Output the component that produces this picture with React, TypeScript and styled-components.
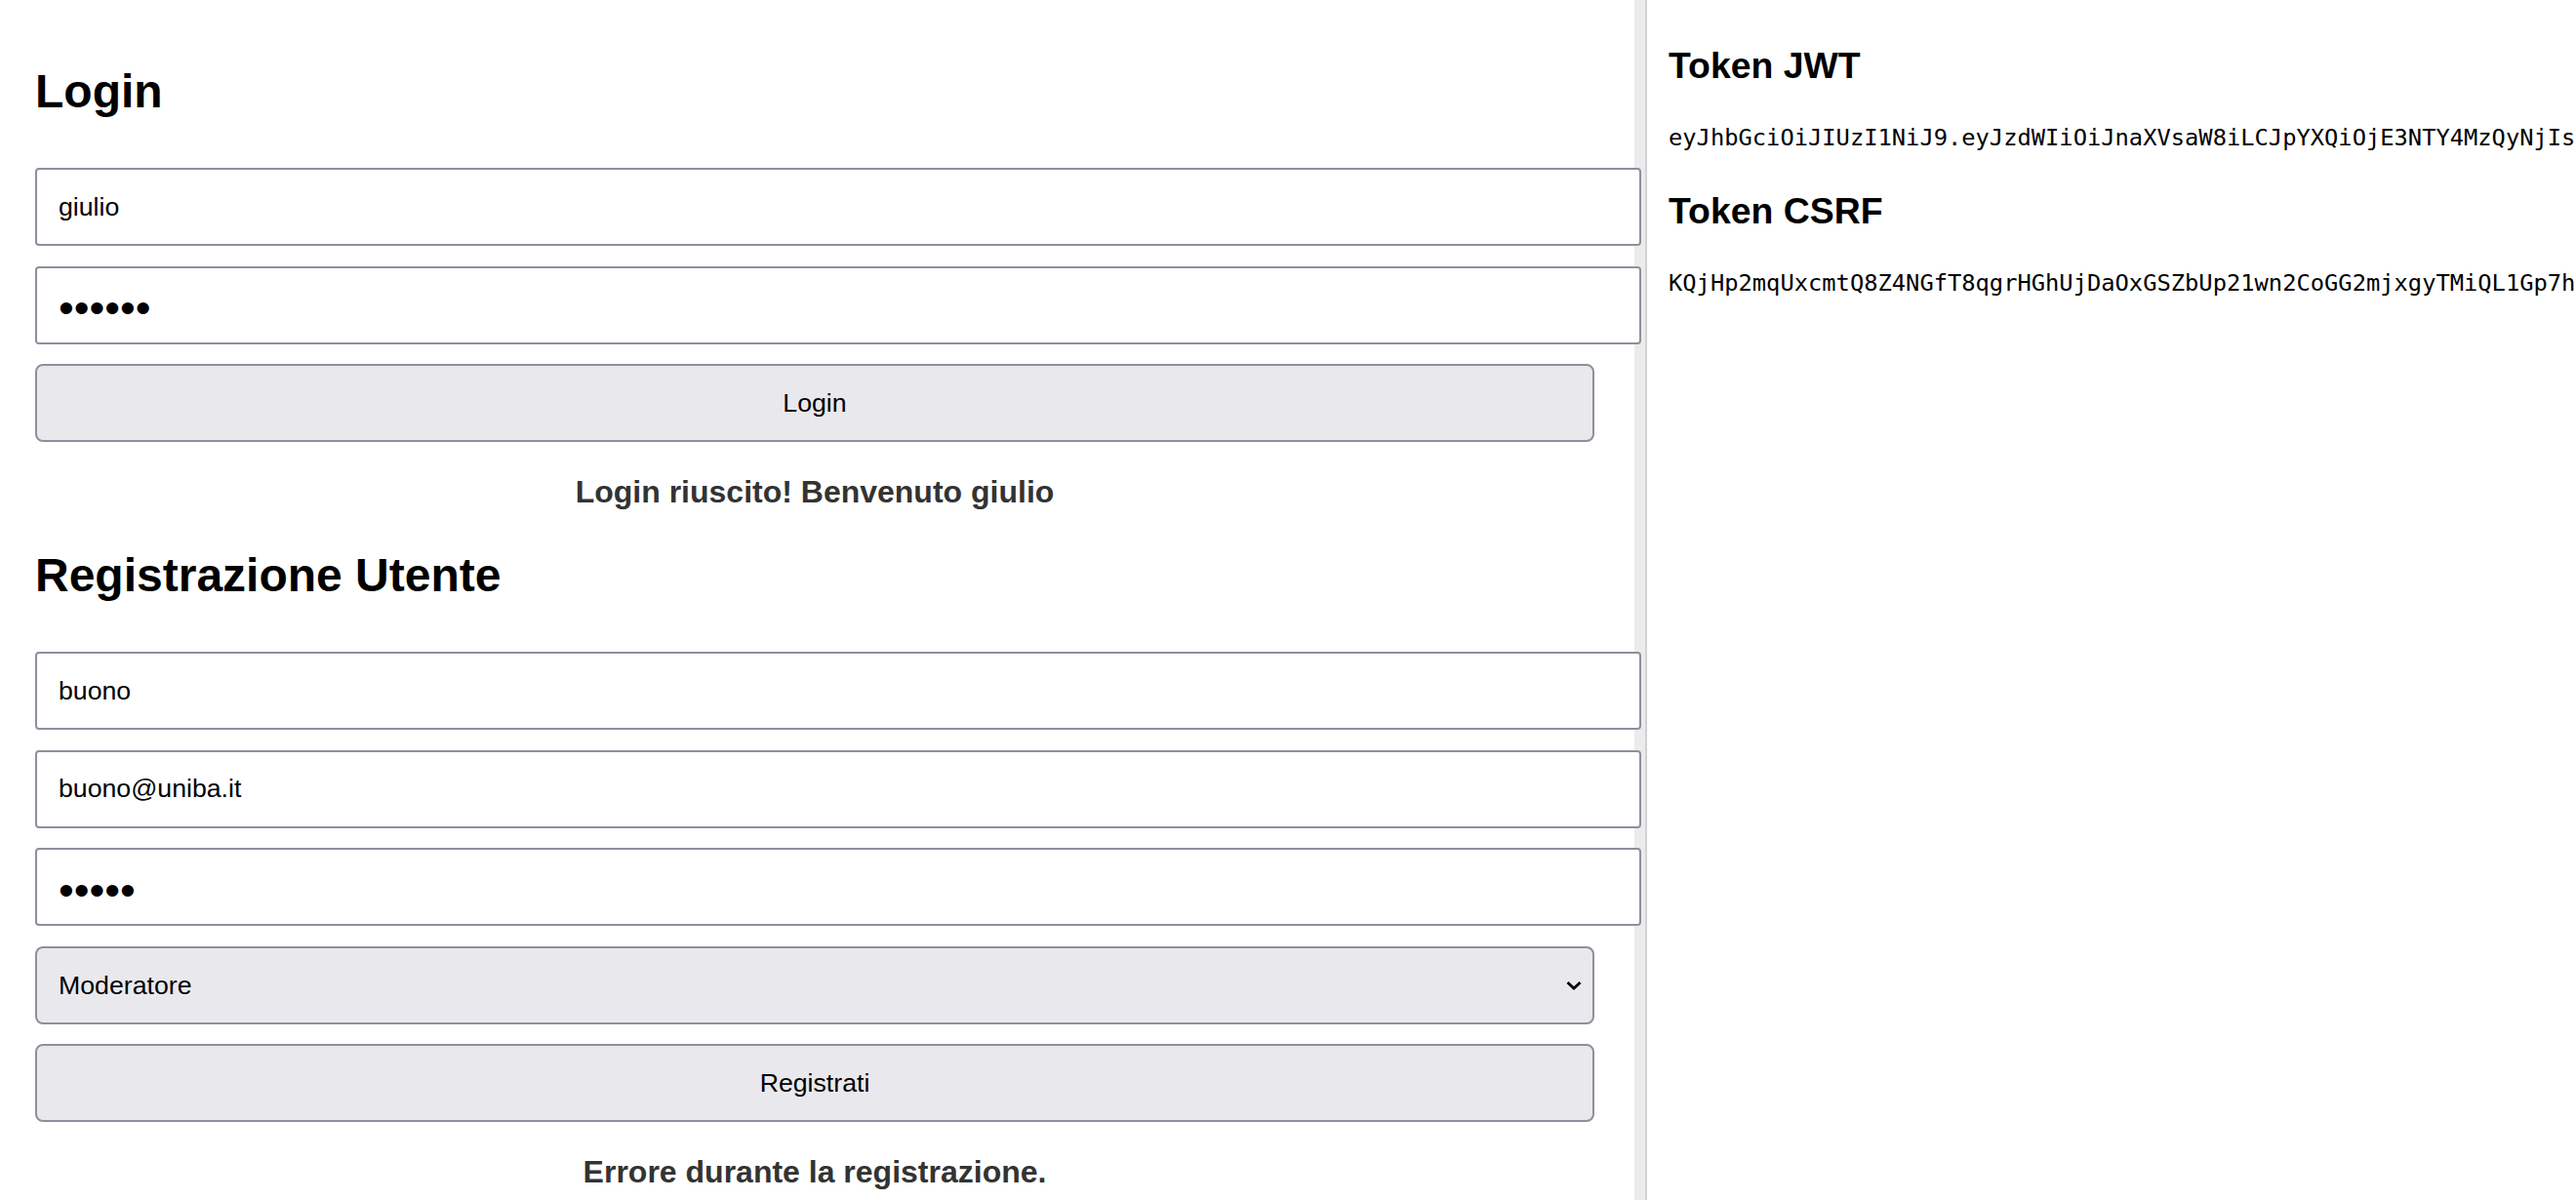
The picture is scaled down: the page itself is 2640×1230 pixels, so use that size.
import React from "react";
import styled, { createGlobalStyle } from "styled-components";

const GlobalStyle = createGlobalStyle`
  html, body {
    margin: 0;
    padding: 0;
    background: #ffffff;
    overflow: hidden;
  }
  body {
    font-family: "Liberation Sans", Arial, sans-serif;
    color: #000;
  }
`;

const Page = styled.div`
  display: flex;
  flex-direction: row;
  height: 100vh;
  width: 100vw;
  overflow: hidden;
`;

const LeftPanel = styled.div`
  flex: none;
  width: 1688px;
  box-sizing: border-box;
  padding: 66.4px 54px 0 36px;
  background: linear-gradient(
    to left,
    #d2d2d2 0 2px,
    #ebebeb 2px 13px,
    #ffffff 13px
  );
  display: flex;
  flex-direction: column;
  gap: 39px;
`;

const RightPanel = styled.div`
  flex: 1;
  min-width: 0;
  padding: 44.8px 0 0 22px;
  overflow: hidden;
`;

const Section = styled.section`
  display: flex;
  flex-direction: column;
`;

const Title = styled.h2`
  margin: 0 0 50px;
  font-size: 48px;
  line-height: 56px;
  font-weight: 700;
  color: #000;
`;

const Form = styled.div`
  display: flex;
  flex-direction: column;
  gap: 20.5px;
`;

const TextInput = styled.input`
  display: block;
  width: 100%;
  height: 76px;
  padding: 0 22px;
  box-sizing: content-box;
  border: 2px solid #8f8f9d;
  border-radius: 4px;
  background: #ffffff;
  font-family: "Liberation Sans", Arial, sans-serif;
  font-size: 26.7px;
  color: #000;
  outline: none;
  &[type="password"] {
    font-size: 45px;
    padding-top: 7px;
    height: 69px;
  }
`;

const Button = styled.button`
  display: block;
  width: 100%;
  height: 80px;
  box-sizing: border-box;
  border: 2px solid #8f8f9d;
  border-radius: 8px;
  background: #e9e9ed;
  font-family: "Liberation Sans", Arial, sans-serif;
  font-size: 26.7px;
  color: #000;
  cursor: pointer;
`;

const SelectWrap = styled.div`
  position: relative;
  width: 100%;
  height: 80px;
`;

const Select = styled.select`
  appearance: none;
  -webkit-appearance: none;
  display: block;
  width: 100%;
  height: 80px;
  box-sizing: border-box;
  padding: 0 60px 0 22px;
  border: 2px solid #8f8f9d;
  border-radius: 8px;
  background: #e9e9ed;
  font-family: "Liberation Sans", Arial, sans-serif;
  font-size: 26.7px;
  color: #000;
  outline: none;
`;

const Chevron = styled.svg`
  position: absolute;
  right: 12px;
  top: 34px;
  width: 18px;
  height: 12px;
  pointer-events: none;
`;

const Message = styled.p`
  margin: 33px 0 0;
  text-align: center;
  font-size: 32px;
  line-height: 37px;
  font-weight: 700;
  color: #333333;
`;

const TokenTitle = styled.h3`
  margin: 0;
  font-size: 37.4px;
  line-height: 44px;
  font-weight: 700;
  color: #000;
`;

const TokenValue = styled.p`
  margin: 37px 0 38px;
  font-family: "DejaVu Sans Mono", "Liberation Mono", monospace;
  font-size: 23.75px;
  line-height: 30px;
  white-space: nowrap;
  color: #000;
`;

const JWT =
  "eyJhbGciOiJIUzI1NiJ9.eyJzdWIiOiJnaXVsaW8iLCJpYXQiOjE3NTY4MzQyNjIsImV4cCI6MTc1NjgzNzg2Mn0.Qm9sSx7vYzK3pLr0aNfT2uW8cQeHd5gJ1sVbXyA4oM";
const CSRF =
  "KQjHp2mqUxcmtQ8Z4NGfT8qgrHGhUjDaOxGSZbUp21wn2CoGG2mjxgyTMiQL1Gp7hRz4Tw9kLcVb";

export default function App() {
  return (
    <>
      <GlobalStyle />
      <Page>
        <LeftPanel>
          <Section>
            <Title>Login</Title>
            <Form>
              <TextInput type="text" defaultValue="giulio" />
              <TextInput type="password" defaultValue="giulio" />
              <Button type="button">Login</Button>
            </Form>
            <Message>Login riuscito! Benvenuto giulio</Message>
          </Section>
          <Section>
            <Title>Registrazione Utente</Title>
            <Form>
              <TextInput type="text" defaultValue="buono" />
              <TextInput type="email" defaultValue="buono@uniba.it" />
              <TextInput type="password" defaultValue="buono" />
              <SelectWrap>
                <Select defaultValue="moderatore">
                  <option value="utente">Utente</option>
                  <option value="moderatore">Moderatore</option>
                  <option value="admin">Admin</option>
                </Select>
                <Chevron viewBox="0 0 18 12">
                  <polyline
                    points="2.5,3 9,9 15.5,3"
                    fill="none"
                    stroke="#000"
                    strokeWidth="2.8"
                  />
                </Chevron>
              </SelectWrap>
              <Button type="button">Registrati</Button>
            </Form>
            <Message>Errore durante la registrazione.</Message>
          </Section>
        </LeftPanel>
        <RightPanel>
          <TokenTitle>Token JWT</TokenTitle>
          <TokenValue>{JWT}</TokenValue>
          <TokenTitle>Token CSRF</TokenTitle>
          <TokenValue>{CSRF}</TokenValue>
        </RightPanel>
      </Page>
    </>
  );
}
